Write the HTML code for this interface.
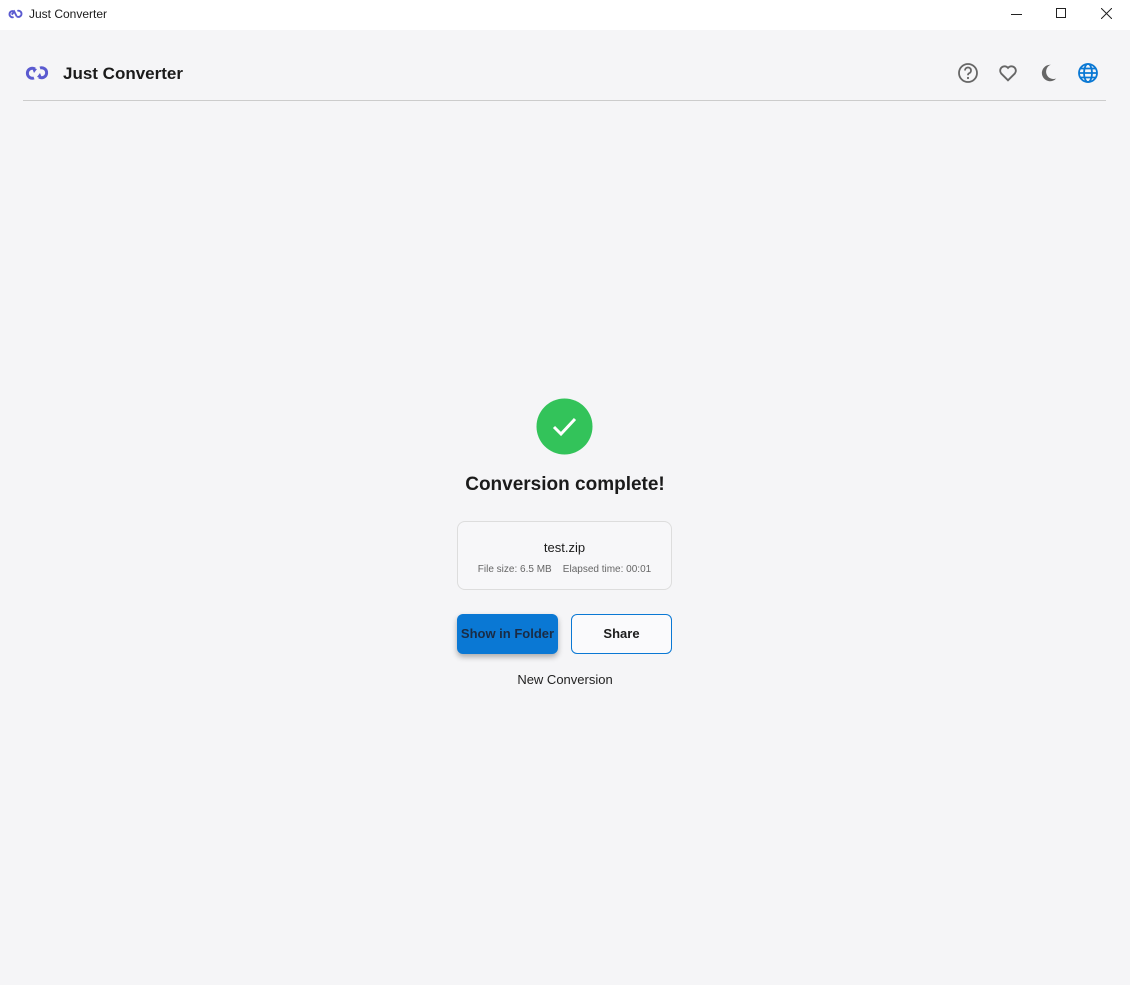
<!DOCTYPE html>
<html><head><style>
*{margin:0;padding:0;box-sizing:border-box}
body{width:1130px;height:985px;background:#f5f5f7;font-family:"Liberation Sans",sans-serif;position:relative;overflow:hidden;color:#1b1b1b}
.tb{position:absolute;top:0;left:0;width:1130px;height:30px;background:#fff}
.abs{position:absolute}
</style></head><body>
<div class="tb">
<svg class="abs" style="left:8px;top:8px" width="15" height="12" viewBox="0 0 24 16"><path d="M10 4 A5 5 0 1 0 9 13 M14 12 A5 5 0 1 0 15 3 M6 9 L10 4 L14 12" fill="none" stroke="#5a5ad0" stroke-width="3"/></svg>
<div class="abs" style="left:29px;top:7px;font-size:12px">Just Converter</div>
<div class="abs" style="left:1011px;top:14px;width:11px;height:1px;background:#222"></div>
<div class="abs" style="left:1056px;top:8px;width:10px;height:10px;border:1px solid #222"></div>
<svg class="abs" style="left:1101px;top:8px" width="11" height="11"><path d="M0 0L11 11M11 0L0 11" stroke="#222"/></svg>
</div>
<svg class="abs" style="left:24px;top:65px" width="26" height="16" viewBox="0 0 24 16"><path d="M10 4 A5 5 0 1 0 9 13 M14 12 A5 5 0 1 0 15 3" fill="none" stroke="#5a5ad0" stroke-width="3"/><path d="M7 3 L12 4 L9 8Z M17 13 L12 12 L15 8Z" fill="#5a5ad0"/></svg>
<div class="abs" style="left:63px;top:64px;font-size:17px;font-weight:bold">Just Converter</div>
<svg class="abs" style="left:957px;top:62px" width="22" height="22" viewBox="0 0 22 22"><circle cx="11" cy="11" r="9" fill="none" stroke="#666" stroke-width="1.8"/><path d="M8 8.5a3 3 0 1 1 4 2.8c-.8.4-1 1-1 2" fill="none" stroke="#666" stroke-width="1.8"/><circle cx="11" cy="16" r="1.1" fill="#666"/></svg>
<svg class="abs" style="left:997px;top:62px" width="22" height="22" viewBox="0 0 24 24"><path d="M12 20l-7.5-7.5a4.8 4.8 0 0 1 7.5-6 4.8 4.8 0 0 1 7.5 6Z" fill="none" stroke="#666" stroke-width="2"/></svg>
<svg class="abs" style="left:1037px;top:62px" width="22" height="22" viewBox="0 0 24 24"><path d="M15 3a9 9 0 1 0 6 15A8 8 0 0 1 15 3Z" fill="#666"/></svg>
<svg class="abs" style="left:1077px;top:62px" width="22" height="22" viewBox="0 0 22 22" fill="none" stroke="#0a78d4" stroke-width="1.8"><circle cx="11" cy="11" r="9"/><ellipse cx="11" cy="11" rx="4" ry="9"/><path d="M2 11h18M3.5 6.5h15M3.5 15.5h15"/></svg>
<div class="abs" style="left:23px;top:100px;width:1083px;height:1px;background:#ccc"></div>
<svg class="abs" style="left:536px;top:398px" width="57" height="57"><circle cx="28.5" cy="28.5" r="28" fill="#33c35a"/><path d="M18 29l7 7 14-15" fill="none" stroke="#fff" stroke-width="3"/></svg>
<div class="abs" style="left:0;width:1130px;top:474px;text-align:center;font-size:19px;font-weight:bold">Conversion complete!</div>
<div class="abs" style="left:457px;top:521px;width:215px;height:69px;border:1px solid #ddd;border-radius:8px;background:#f7f7f9"></div>
<div class="abs" style="left:457px;width:215px;top:540px;text-align:center;font-size:13px">test.zip</div>
<div class="abs" style="left:457px;width:215px;top:564px;text-align:center;font-size:10px;color:#666">File size: 6.5 MB&nbsp;&nbsp;&nbsp;&nbsp;Elapsed time: 00:01</div>
<div class="abs" style="left:457px;top:614px;width:101px;height:40px;background:#0a78d4;border-radius:6px;box-shadow:0 3px 6px rgba(0,0,0,.3);font-size:13px;font-weight:bold;color:#1a2b44;text-align:center;line-height:40px">Show in Folder</div>
<div class="abs" style="left:571px;top:614px;width:101px;height:40px;border:1px solid #0a78d4;border-radius:6px;background:#fafafc;font-size:13px;font-weight:bold;text-align:center;line-height:38px">Share</div>
<div class="abs" style="left:0;width:1130px;top:672px;text-align:center;font-size:13px;color:#222">New Conversion</div>
</body></html>
